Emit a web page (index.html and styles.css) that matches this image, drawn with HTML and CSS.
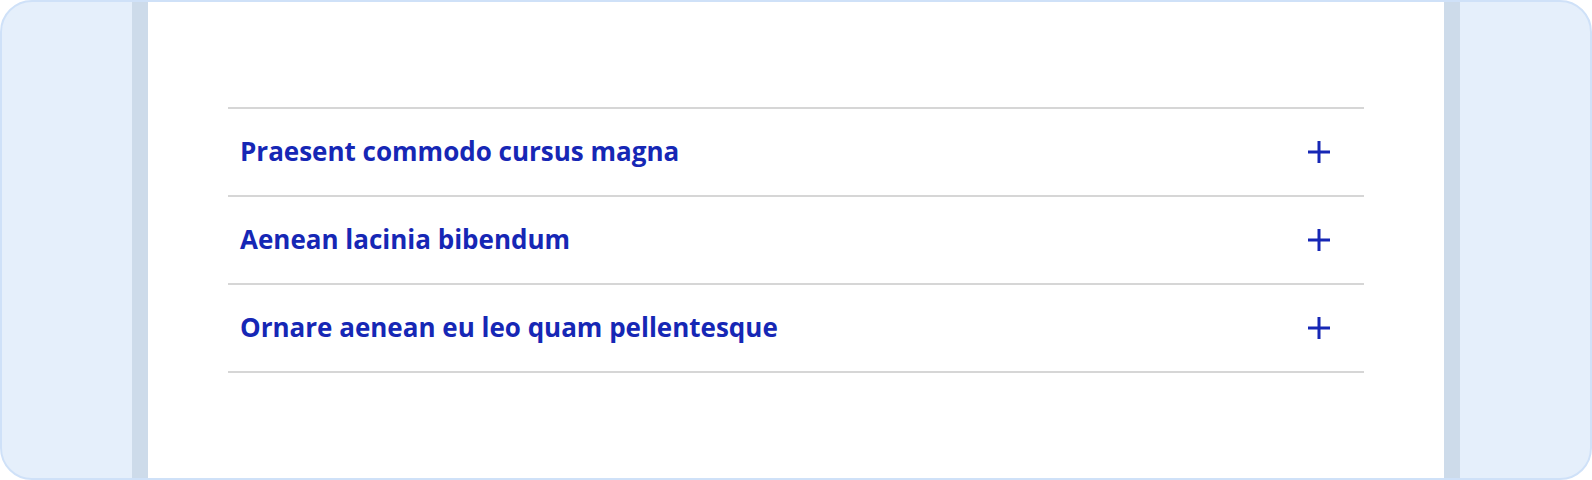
FILE: index.html
```html
<!DOCTYPE html>
<html lang="en">
<head>
    <meta charset="UTF-8">
    <meta name="viewport" content="width=device-width, initial-scale=1.0">
    <title>Accordion</title>
    <link rel="stylesheet" href="styles.css">
</head>
<body>
    <div class="frame">
        <div class="stage">
            <div class="accordion">
                <div class="item">
                    <button class="item-head">
                        <span class="item-title">Praesent commodo cursus magna</span>
                        <svg class="plus" width="22" height="22" viewBox="0 0 22 22"><path d="M11 0v22M0 11h22"/></svg>
                    </button>
                </div>
                <div class="item">
                    <button class="item-head">
                        <span class="item-title">Aenean lacinia bibendum</span>
                        <svg class="plus" width="22" height="22" viewBox="0 0 22 22"><path d="M11 0v22M0 11h22"/></svg>
                    </button>
                </div>
                <div class="item">
                    <button class="item-head">
                        <span class="item-title">Ornare aenean eu leo quam pellentesque</span>
                        <svg class="plus" width="22" height="22" viewBox="0 0 22 22"><path d="M11 0v22M0 11h22"/></svg>
                    </button>
                </div>
            </div>
        </div>
    </div>
</body>
</html>
```

FILE: styles.css
```css
body {
    margin: 0;
    font-family: "Open Sans", Arial, sans-serif;
}

.frame {
    width: 1592px;
    height: 480px;
    box-sizing: border-box;
    border: 2px solid #cfe1f8;
    border-radius: 32px;
    background-color: #e5effb;
    overflow: hidden;
    display: flex;
    justify-content: center;
}

/* white page with grey gutters either side */
.stage {
    width: 1328px;
    padding: 0 80px;
    box-sizing: border-box;
    background-color: #fff;
    border-left: 16px solid #cddbea;
    border-right: 16px solid #cddbea;
    display: flex;
    flex-direction: column;
    justify-content: center;
}

.accordion {
    border-bottom: 2px solid #d6d6d6;
}

.item {
    border-top: 2px solid #d6d6d6;
}

.item-head {
    width: 100%;
    height: 86px;
    display: flex;
    align-items: center;
    justify-content: space-between;
    padding: 0 34px 0 12px;
    border: none;
    background: none;
    font-family: inherit;
    cursor: pointer;
}

.item-title {
    font-size: 26px;
    line-height: 1.3;
    font-weight: 700;
    color: #1627b5;
}

.plus {
    stroke: #1627b5;
    stroke-width: 3;
}
```
